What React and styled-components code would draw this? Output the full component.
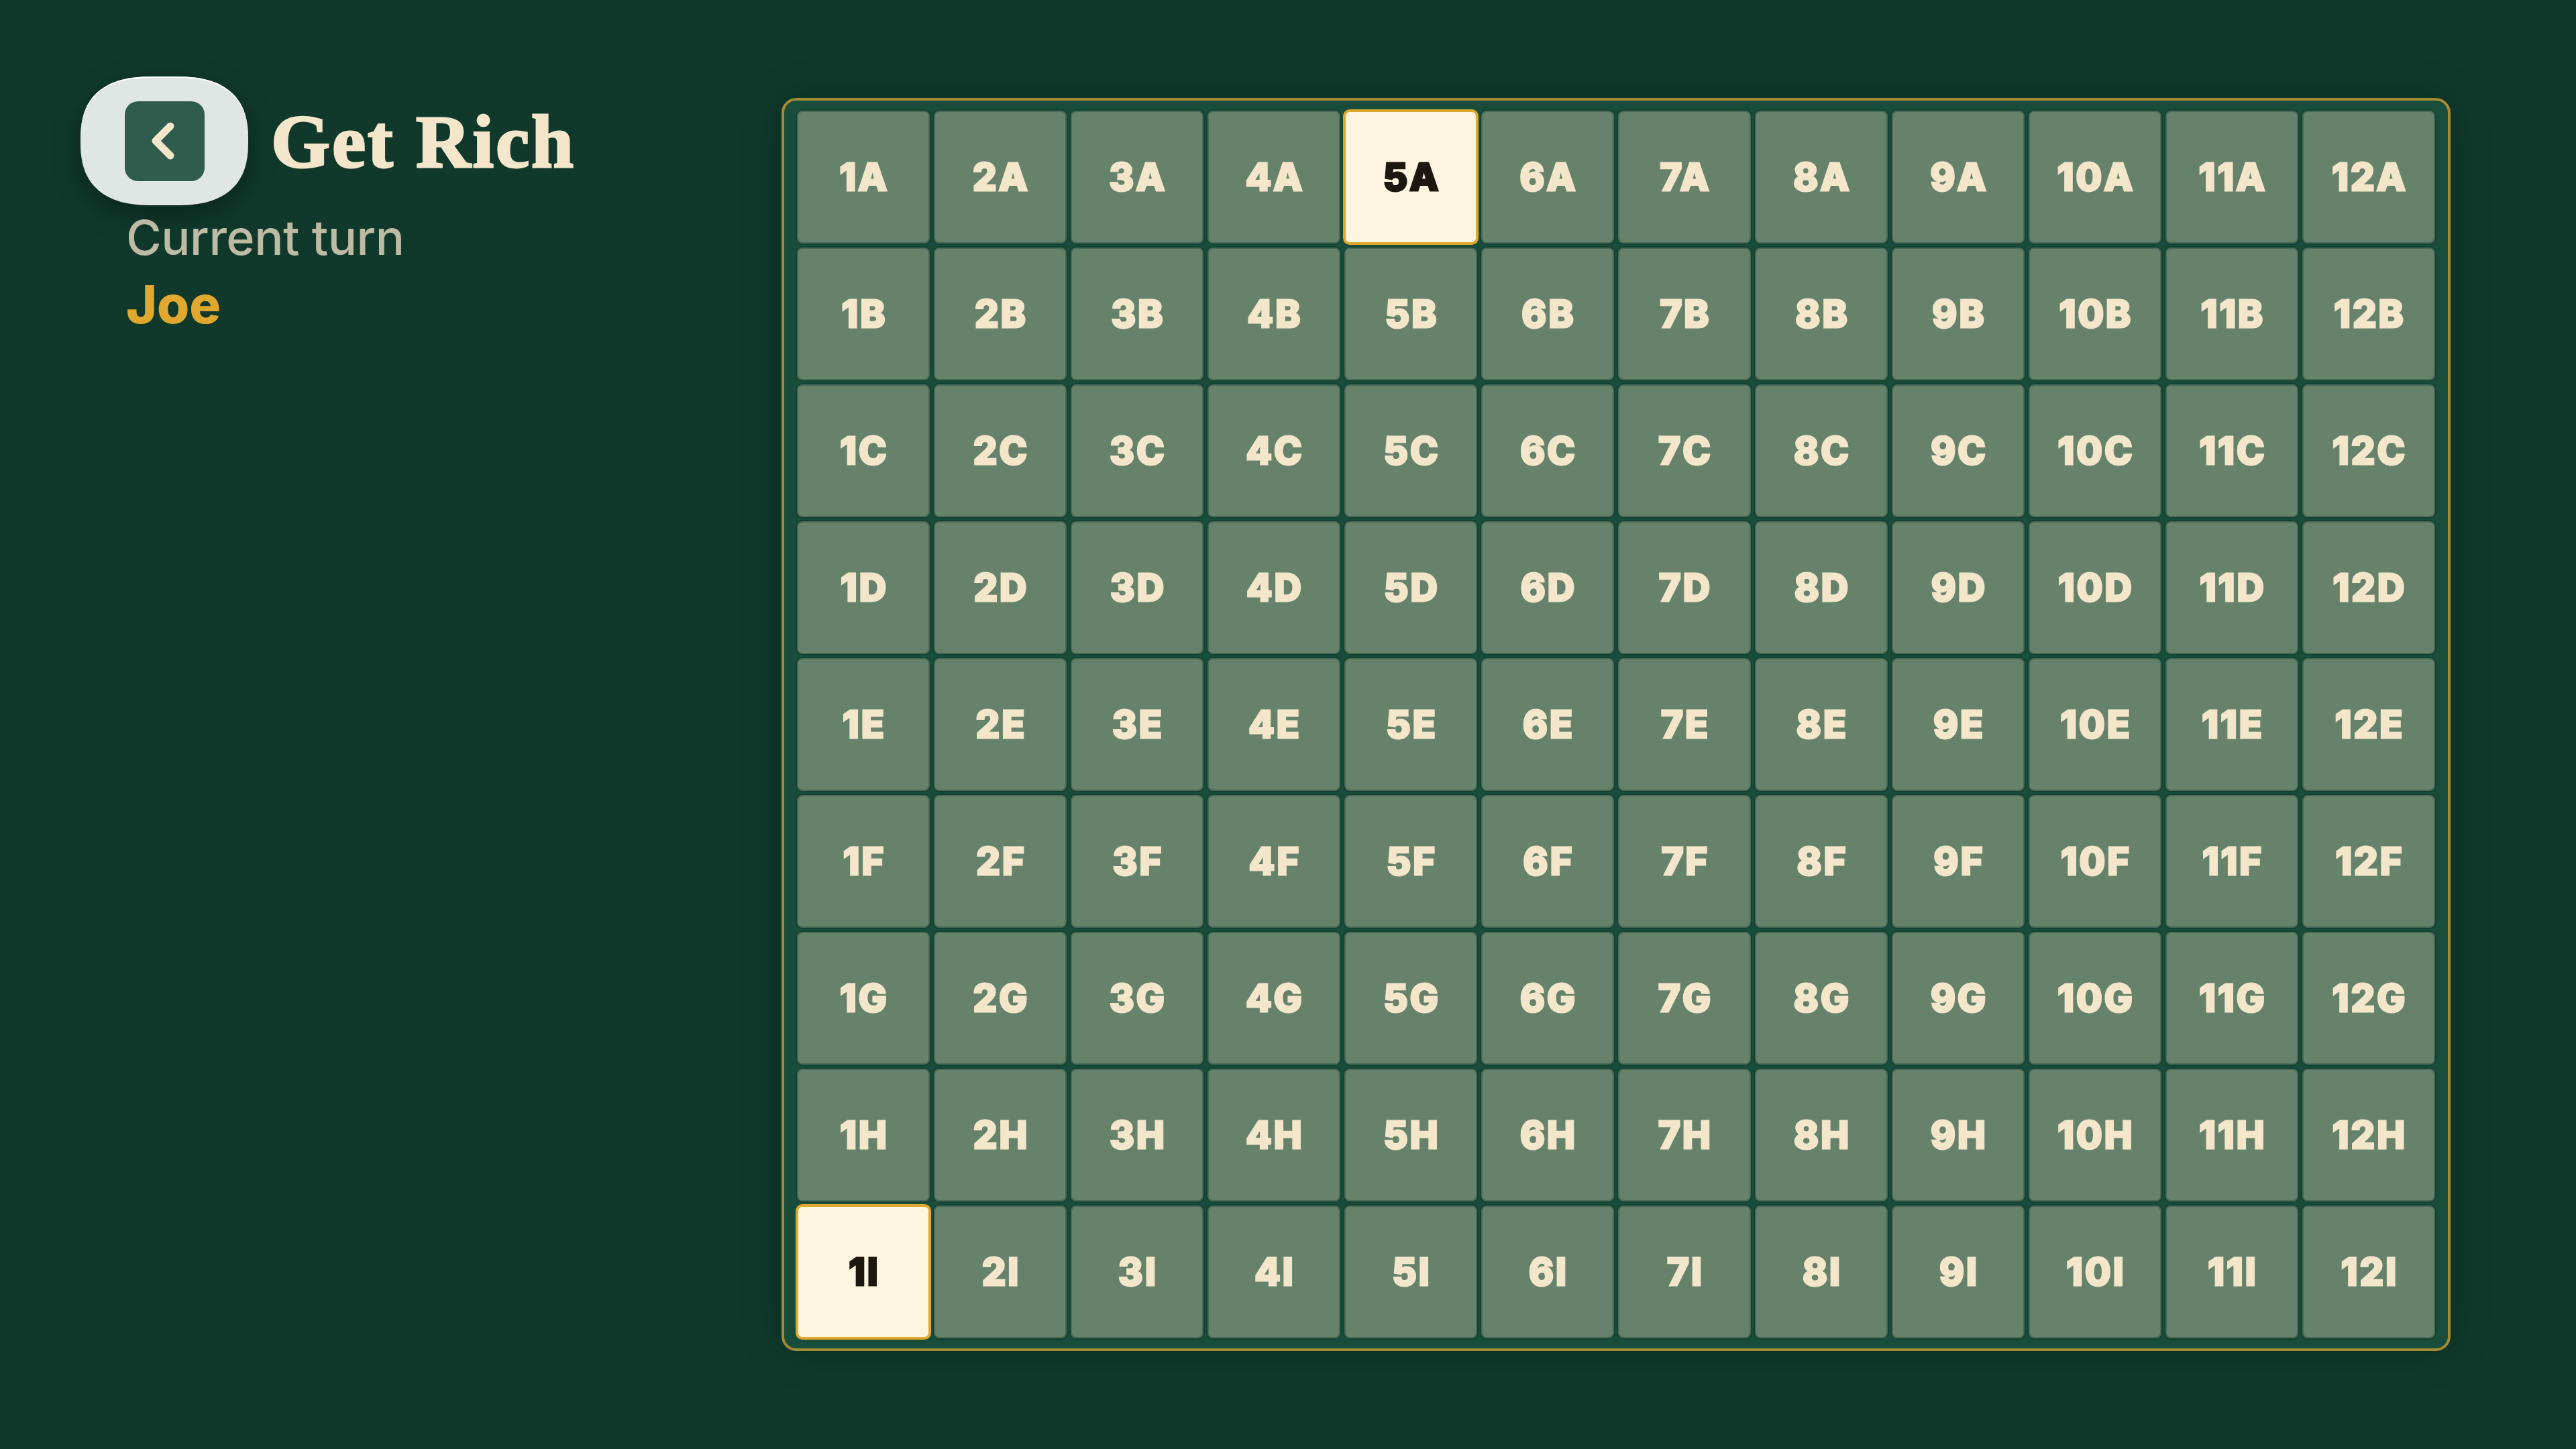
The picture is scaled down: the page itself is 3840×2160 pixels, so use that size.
import styled, { createGlobalStyle } from "styled-components"

const COLS = [1, 2, 3, 4, 5, 6, 7, 8, 9, 10, 11, 12]
const ROWS = ["A", "B", "C", "D", "E", "F", "G", "H", "I"]
const ACTIVE = ["5A", "1I"]

const GlobalStyle = createGlobalStyle`
html, body {
    margin: 0;
    padding: 0;
    background-color: #10392c;
    overflow: hidden;
}
`

export default function App() {
    return (
        <>
            <GlobalStyle />
            <Page>
                <Sidebar>
                    <Header>
                        <BackButton>
                            <BackIcon>
                                <svg width="34" height="56" viewBox="0 0 34 56" fill="none">
                                    <path d="M28 6 L6 28 L28 50" stroke="#f3e6ca" strokeWidth="11" strokeLinecap="round" strokeLinejoin="round" />
                                </svg>
                            </BackIcon>
                        </BackButton>
                        <Title>Get Rich</Title>
                    </Header>
                    <Turn>
                        <TurnLabel>Current turn</TurnLabel>
                        <PlayerName>Joe</PlayerName>
                    </Turn>
                </Sidebar>
                <Board>
                    {ROWS.map((row) =>
                        COLS.map((col) => {
                            const name = `${col}${row}`
                            return <Tile key={name} $active={ACTIVE.includes(name)}>{name}</Tile>
                        })
                    )}
                </Board>
            </Page>
        </>
    )
}

const Page = styled.div`
width: 3840px;
height: 2160px;
display: flex;
align-items: flex-start;
box-sizing: border-box;
padding: 114px 0 0 120px;
background-color: #10392c;
`
const Sidebar = styled.div`
width: 1045px;
flex-shrink: 0;
display: flex;
flex-direction: column;
`
const Header = styled.div`
display: flex;
align-items: center;
gap: 34px;
`
const BackButton = styled.button`
width: 250px;
height: 192px;
display: flex;
align-items: center;
justify-content: center;
padding: 0;
border-style: none;
border-radius: 110px / 96px;
corner-shape: superellipse(1.35);
background-color: #e0e6e3;
box-shadow: inset 0 2px 1px #fff, 0 14px 40px rgba(0, 0, 0, 0.35);
`
const BackIcon = styled.div`
width: 119px;
height: 119px;
display: flex;
align-items: center;
justify-content: center;
padding-right: 4px;
box-sizing: border-box;
border-radius: 20px;
background-color: #2f5c4c;
`
const Title = styled.h1`
margin: 0;
font-family: "Liberation Serif", serif;
font-weight: 700;
font-size: 113px;
line-height: 1;
letter-spacing: 3px;
color: #f3e6ca;
-webkit-text-stroke: 3px #f3e6ca;
`
const Turn = styled.div`
display: flex;
flex-direction: column;
margin-top: -2px;
padding-left: 68px;
`
const TurnLabel = styled.div`
font-family: Inter, sans-serif;
font-weight: 500;
font-size: 72px;
line-height: 100px;
letter-spacing: -0.5px;
color: #bdbba4;
`
const PlayerName = styled.div`
font-family: Inter, sans-serif;
font-weight: 800;
font-size: 78px;
line-height: 100px;
color: #e0a82e;
`
const Board = styled.div`
display: grid;
grid-template-columns: repeat(12, 198px);
grid-template-rows: repeat(9, 198px);
gap: 6px;
margin-top: 32px;
padding: 15px 19px;
border: 4px solid #a48c33;
border-radius: 22px;
background-color: #194d3b;
box-shadow: 0 0 60px rgba(0, 0, 0, 0.22);
`
const Tile = styled.div`
display: flex;
align-items: center;
justify-content: center;
box-sizing: border-box;
margin: ${(props) => (props.$active ? "-2px" : "0")};
padding-left: 3px;
border-radius: ${(props) => (props.$active ? "10px" : "8px")};
border: ${(props) => (props.$active ? "4px solid #e0a82e" : "2px solid #4a6957")};
background-color: ${(props) => (props.$active ? "#fdf5df" : "#66826b")};
box-shadow: ${(props) => (props.$active ? "none" : "0 0 0 2px rgba(15, 58, 44, 0.55)")};
font-family: Inter, sans-serif;
font-weight: 800;
font-size: 56px;
letter-spacing: 3px;
color: ${(props) => (props.$active ? "#1c1710" : "#f3e6ca")};
-webkit-text-stroke: 3px ${(props) => (props.$active ? "#1c1710" : "#f3e6ca")};
`
